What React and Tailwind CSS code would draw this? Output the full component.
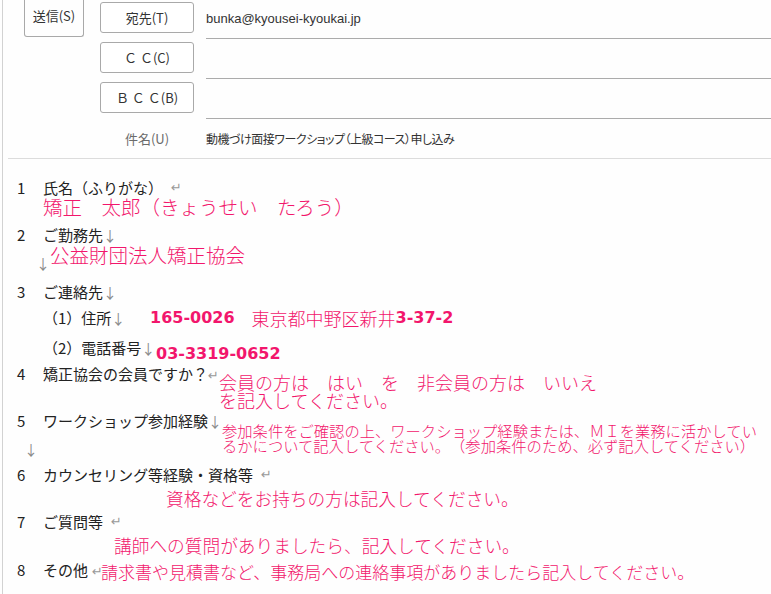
import React from 'react';

const jp = "font-['Noto_Sans_CJK_JP',sans-serif]";
const pink = 'text-[#f2166c] font-light';

function Ret() {
  return <span className="ml-[8px] text-[13px] text-[#999] font-['DejaVu_Sans',sans-serif]">↵</span>;
}

function Down() {
  return <span className="text-[14px] text-[#8a8a8a]">↓</span>;
}

function Row({ className = '', children }) {
  return <div className={`flex h-[20px] items-start whitespace-nowrap pl-[14px] ${className}`}>{children}</div>;
}

function Num({ n }) {
  return <span className="w-[26px] shrink-0 text-[15px] leading-[20px]">{n}</span>;
}

function HeaderButton({ label }) {
  return (
    <div className="flex h-[31px] w-[94px] shrink-0 items-center justify-center rounded-[3px] border border-[#a9a9a9] bg-white text-[13px] text-[#333]">
      {label}
    </div>
  );
}

export default function App() {
  return (
    <div className={`min-h-[594px] w-[771px] overflow-hidden bg-[#fefefe] pl-[2px] text-[#222] [text-spacing-trim:space-all] ${jp}`}>
      <div className="min-h-[594px] border-l border-[#d2d2d2]">
        <div className="flex">
          <div className="w-[97px] shrink-0 pl-[21px]">
            <div className="flex h-[37px] w-[60px] items-center justify-center rounded-b-[3px] border border-t-0 border-[#a9a9a9] pb-[5px] text-[13px] text-[#333]">
              送信(S)
            </div>
          </div>
          <div className="flex flex-1 flex-col">
            <div className="flex h-[39px] pt-[2px]">
              <HeaderButton label="宛先(T)" />
              <div className="-mt-[2px] ml-[12px] flex flex-1 items-center border-b border-[#ababab] text-[13px] text-[#333] font-['Liberation_Sans',sans-serif]">
                bunka@kyousei-kyoukai.jp
              </div>
            </div>
            <div className="flex h-[40px] pt-[3px]">
              <HeaderButton label="Ｃ Ｃ(C)" />
              <div className="-mt-[3px] ml-[12px] flex-1 border-b border-[#ababab]" />
            </div>
            <div className="flex h-[40px] pt-[3px]">
              <HeaderButton label="Ｂ Ｃ Ｃ(B)" />
              <div className="-mt-[3px] ml-[12px] flex-1 border-b border-[#ababab]" />
            </div>
            <div className="flex h-[39px] items-center">
              <div className="w-[94px] shrink-0 text-center text-[13px] text-[#6b6b6b]">件名(U)</div>
              <div className="ml-[12px] flex-1 text-[12px] tracking-[-0.5px] text-[#333] [font-feature-settings:'palt']">
                動機づけ面接ワークショップ（上級コース）申し込み
              </div>
            </div>
          </div>
        </div>
        <div className="ml-[5px] h-px bg-[#dcdcdc]" />

        <div className="pt-[19px] text-[15px] leading-[20px]">
          <Row>
            <Num n="1" />
            <span>氏名（ふりがな）</span>
            <Ret />
          </Row>
          <Row className="-mt-[1px]">
            <span className="w-[26px] shrink-0" />
            <span className={`${pink} text-[19.5px] leading-[20px]`}>矯正　太郎（きょうせい　たろう）</span>
          </Row>
          <Row className="mt-[8px]">
            <Num n="2" />
            <span>ご勤務先</span>
            <Down />
          </Row>
          <Row className="pl-[33px]">
            <span className="mt-[8px] w-[14px] shrink-0 text-center">
              <Down />
            </span>
            <span className={`${pink} text-[19.5px] leading-[20px]`}>公益財団法人矯正協会</span>
          </Row>
          <Row className="mt-[17px]">
            <Num n="3" />
            <span>ご連絡先</span>
            <Down />
          </Row>
          <Row className="mt-[6px] items-center">
            <span className="w-[26px] shrink-0" />
            <span className="w-[107px] shrink-0">
              （1）住所<Down />
            </span>
            <span className="text-[#f2166c] text-[16px] font-bold font-['DejaVu_Sans',sans-serif]">165-0026</span>
            <span className={`${pink} ml-[17px] text-[18px]`}>東京都中野区新井</span>
            <span className="text-[#f2166c] text-[16px] font-bold font-['DejaVu_Sans',sans-serif]">3-37-2</span>
          </Row>
          <Row className="mt-[10px]">
            <span className="w-[26px] shrink-0" />
            <span className="w-[113px] shrink-0">
              （2）電話番号<Down />
            </span>
            <span className="mt-[6px] text-[16px] font-bold leading-[20px] text-[#f2166c] font-['DejaVu_Sans',sans-serif]">
              03-3319-0652
            </span>
          </Row>
          <Row className="mt-[6px]">
            <Num n="4" />
            <span className="w-[176px] shrink-0">
              矯正協会の会員ですか？<span className="text-[13px] text-[#999] font-['DejaVu_Sans',sans-serif]">↵</span>
            </span>
            <div className={`${pink} mt-[9px] text-[18px] leading-[18px]`}>
              <div>会員の方は　はい　を　非会員の方は　いいえ</div>
              <div>を記入してください。</div>
            </div>
          </Row>
          <Row className="mt-[27px]">
            <Num n="5" />
            <span className="w-[179px] shrink-0">
              ワークショップ参加経験<Down />
            </span>
            <div className={`${pink} mt-[12px] text-[15.3px] leading-[15px]`}>
              <div>参加条件をご確認の上、ワークショップ経験または、ＭＩを業務に活かしてい</div>
              <div>るかについて記入してください。（参加条件のため、必ず記入してください）</div>
            </div>
          </Row>
          <Row className="mt-[8px] pl-[21px]">
            <span className="w-[12px] text-center">
              <Down />
            </span>
          </Row>
          <Row className="mt-[6px]">
            <Num n="6" />
            <span>カウンセリング等経験・資格等</span>
            <Ret />
          </Row>
          <Row className="mt-[3px] pl-[163px]">
            <span className={`${pink} text-[17.7px] leading-[20px]`}>資格などをお持ちの方は記入してください。</span>
          </Row>
          <Row className="mt-[4px]">
            <Num n="7" />
            <span>ご質問等</span>
            <Ret />
          </Row>
          <Row className="mt-[3px] pl-[111px]">
            <span className={`${pink} text-[17.7px] leading-[20px]`}>講師への質問がありましたら、記入してください。</span>
          </Row>
          <Row className="mt-[5px]">
            <Num n="8" />
            <span className="w-[58px] shrink-0">
              その他<span className="ml-[4px] text-[13px] text-[#999] font-['DejaVu_Sans',sans-serif]">↵</span>
            </span>
            <span className={`${pink} mt-[2px] text-[17px] leading-[20px]`}>
              請求書や見積書など、事務局への連絡事項がありましたら記入してください。
            </span>
          </Row>
        </div>
      </div>
    </div>
  );
}
